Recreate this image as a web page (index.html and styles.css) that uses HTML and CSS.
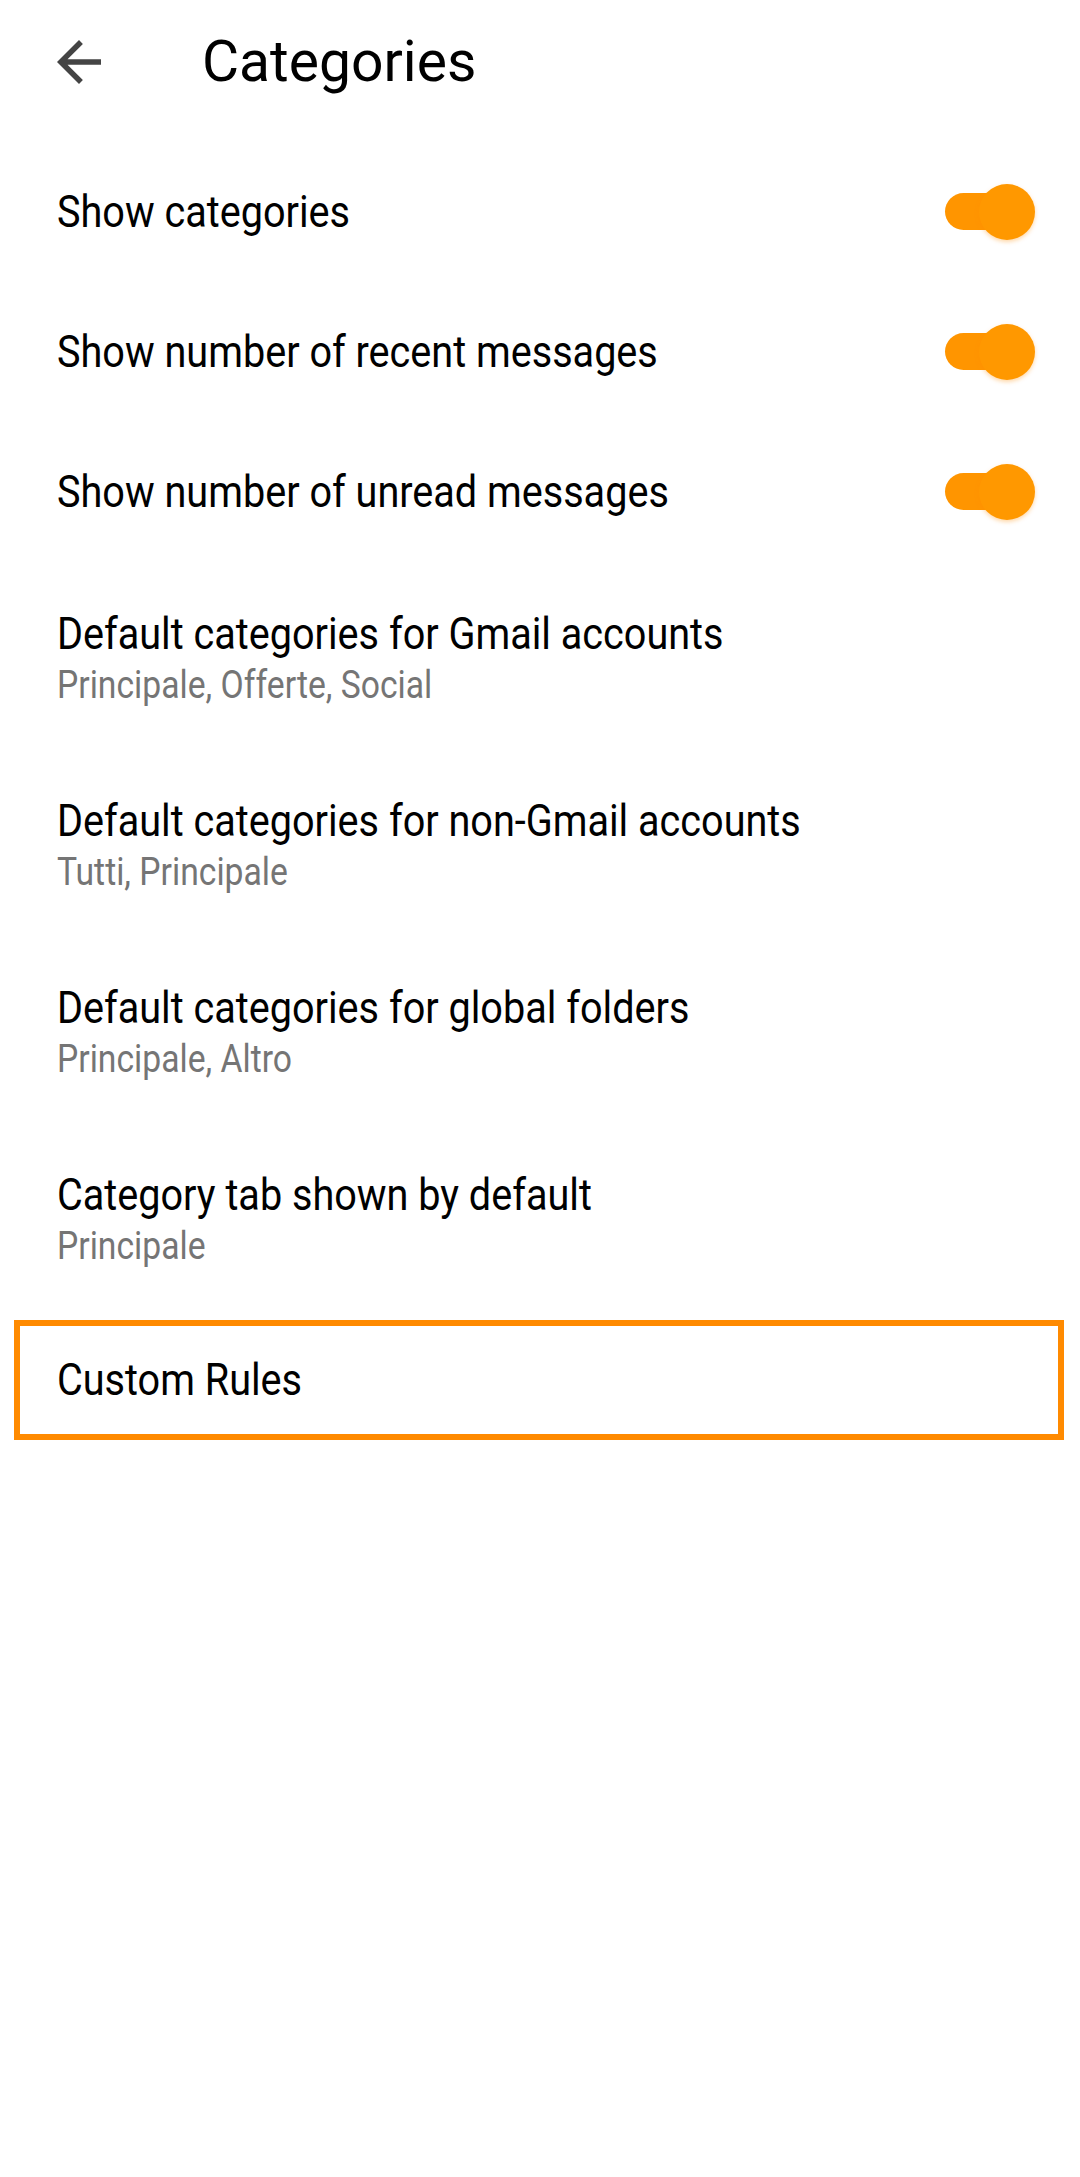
FILE: index.html
```html
<!DOCTYPE html>
<html lang="en">
<head>
<meta charset="utf-8">
<title>Categories</title>
<link rel="stylesheet" href="styles.css">
</head>
<body>
<header class="toolbar">
  <div class="back">
    <svg viewBox="0 0 24 24" width="66" height="66"><path d="M20 11H7.83l5.59-5.59L12 4l-8 8 8 8 1.41-1.41L7.83 13H20v-2z" fill="#444"/></svg>
  </div>
  <h1 class="title">Categories</h1>
</header>
<main class="list">
  <div class="row toggle-row">
    <span class="label">Show categories</span>
    <span class="switch"><span class="track"></span><span class="thumb"></span></span>
  </div>
  <div class="row toggle-row">
    <span class="label">Show number of recent messages</span>
    <span class="switch"><span class="track"></span><span class="thumb"></span></span>
  </div>
  <div class="row toggle-row">
    <span class="label">Show number of unread messages</span>
    <span class="switch"><span class="track"></span><span class="thumb"></span></span>
  </div>
  <div class="row two-line">
    <span class="label">Default categories for Gmail accounts</span>
    <span class="sub">Principale, Offerte, Social</span>
  </div>
  <div class="row two-line">
    <span class="label">Default categories for non-Gmail accounts</span>
    <span class="sub">Tutti, Principale</span>
  </div>
  <div class="row two-line">
    <span class="label">Default categories for global folders</span>
    <span class="sub">Principale, Altro</span>
  </div>
  <div class="row two-line">
    <span class="label">Category tab shown by default</span>
    <span class="sub">Principale</span>
  </div>
  <div class="row focused">
    <span class="label">Custom Rules</span>
  </div>
</main>
</body>
</html>
```
FILE: styles.css
```css
html, body {
  margin: 0;
  padding: 0;
  background: #ffffff;
}
body {
  width: 1080px;
  min-height: 2177px;
  font-family: Roboto, "Noto Sans", sans-serif;
  color: #000000;
}
.toolbar {
  height: 124px;
  display: flex;
  align-items: center;
}
.back {
  width: 66px;
  height: 66px;
  margin-left: 46px;
  display: flex;
}
.title {
  margin: 0 0 0 90px;
  font-size: 57px;
  font-weight: 400;
  line-height: 64px;
  color: #000;
}
.list {
  padding-top: 18px;
  display: flex;
  flex-direction: column;
}
.row {
  box-sizing: border-box;
  padding-left: 57px;
  padding-right: 45px;
}
.label,
.sub {
  display: inline-block;
  transform-origin: left center;
  white-space: nowrap;
}
.label {
  font-size: 44px;
  line-height: 52px;
  color: #000;
  transform: scaleX(0.9);
}
.toggle-row {
  height: 140px;
  display: flex;
  align-items: center;
  justify-content: space-between;
}
.switch {
  position: relative;
  width: 90px;
  height: 56px;
  flex: none;
}
.track {
  position: absolute;
  left: 0;
  top: 9px;
  width: 80px;
  height: 37px;
  border-radius: 19px;
  background: #ff9500;
}
.thumb {
  position: absolute;
  right: 0;
  top: 0;
  width: 56px;
  height: 56px;
  border-radius: 50%;
  background: #ff9800;
  box-shadow: 0 2px 4px rgba(255, 140, 0, 0.35);
}
.two-line {
  height: 187px;
  padding-top: 46px;
  display: flex;
  flex-direction: column;
  align-items: flex-start;
}
.sub {
  font-size: 38.5px;
  line-height: 50px;
  color: #757575;
  transform: scaleX(0.875);
}
.focused {
  margin: 10px 16px 0 14px;
  height: 120px;
  border: 6px solid #ff8a00;
  padding-left: 37px;
  display: flex;
  align-items: center;
}
```
